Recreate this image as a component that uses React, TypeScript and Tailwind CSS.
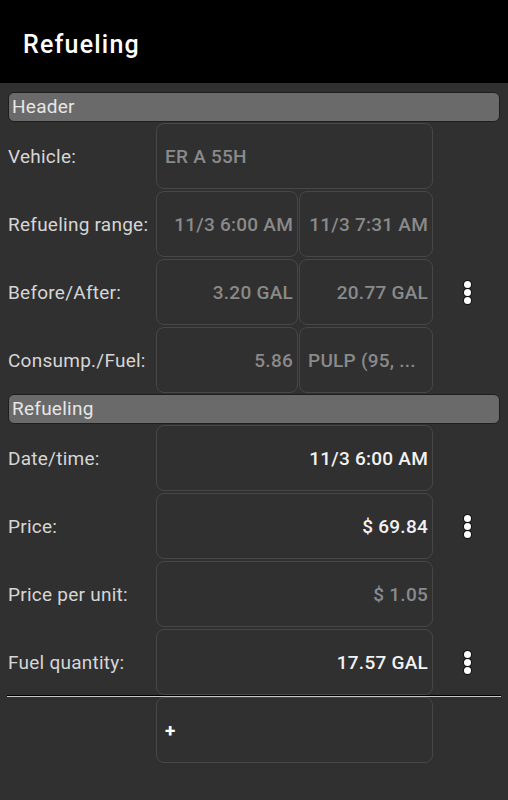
import React from "react";

const Kebab = () => (
  <div className="flex flex-col items-center gap-px">
    <div className="w-[7px] h-[7px] rounded-full bg-white ring-1 ring-[#111]" />
    <div className="w-[7px] h-[7px] rounded-full bg-white ring-1 ring-[#111]" />
    <div className="w-[7px] h-[7px] rounded-full bg-white ring-1 ring-[#111]" />
  </div>
);

type Cell = { text: string; align: "left" | "right"; color: string };

const Row = ({
  label,
  cells,
  kebab,
}: {
  label: string;
  cells: Cell[];
  kebab?: boolean;
}) => (
  <div className="flex h-[68px] items-stretch">
    <div className="w-[156px] pl-2 pt-[3px] flex items-center text-[19px] tracking-[0.25px] text-[#d6d6d6] whitespace-nowrap">
      {label}
    </div>
    <div className={cells.length === 2 ? "grid grid-cols-[142px_134px] gap-px w-[277px] py-px" : "flex w-[277px] py-px"}>
      {cells.map((c, i) => (
        <div
          key={i}
          className={
            "flex-1 flex items-center pt-[3px] border border-[#474747] rounded-[8px] font-medium text-[19px] tracking-[0.25px] whitespace-nowrap overflow-hidden " +
            (c.align === "right" ? "justify-end pr-1" : "justify-start pl-2") +
            " " +
            c.color
          }
        >
          {c.text}
        </div>
      ))}
    </div>
    <div className="flex-1 flex items-center justify-center pr-[8px] pl-[1px]">
      {kebab ? <Kebab /> : null}
    </div>
  </div>
);

const Section = ({ title }: { title: string }) => (
  <div className="mx-2 h-[30px] rounded-[6px] bg-[#6a6a6a] border border-[#1e1e1e] flex items-center pl-[3px] pt-[1px] text-[19px] tracking-[0.25px] text-[#e6e6e6]">
    {title}
  </div>
);

const G = "text-[#8a8a8a]";
const W = "text-[#f2f2f2]";

export default function App() {
  return (
    <div
      className="w-[508px] h-[800px] bg-[#303030] overflow-hidden"
      style={{ fontFamily: "Roboto, 'Noto Sans', sans-serif" }}
    >
      <div className="h-[83px] bg-black flex items-center pl-[23px] pt-[7px] text-white text-[25px] tracking-[1.2px] font-medium">
        Refueling
      </div>
      <div className="pt-[9px]">
        <Section title="Header" />
        <Row label="Vehicle:" cells={[{ text: "ER A 55H", align: "left", color: G }]} />
        <Row
          label="Refueling range:"
          cells={[
            { text: "11/3 6:00 AM", align: "right", color: G },
            { text: "11/3 7:31 AM", align: "right", color: G },
          ]}
        />
        <Row
          label="Before/After:"
          cells={[
            { text: "3.20 GAL", align: "right", color: G },
            { text: "20.77 GAL", align: "right", color: G },
          ]}
          kebab
        />
        <Row
          label="Consump./Fuel:"
          cells={[
            { text: "5.86", align: "right", color: G },
            { text: "PULP (95, ...", align: "left", color: G },
          ]}
        />
        <Section title="Refueling" />
        <Row label="Date/time:" cells={[{ text: "11/3 6:00 AM", align: "right", color: W }]} />
        <Row label="Price:" cells={[{ text: "$ 69.84", align: "right", color: W }]} kebab />
        <Row label="Price per unit:" cells={[{ text: "$ 1.05", align: "right", color: G }]} />
        <Row label="Fuel quantity:" cells={[{ text: "17.57 GAL", align: "right", color: W }]} kebab />
        <div className="mx-[7px] h-[2px] border-t border-black border-b border-b-[#c8c8c8] -mt-px" />
        <div className="flex h-[68px] -mt-px">
          <div className="w-[156px]" />
          <div className="w-[277px] py-px flex">
            <div className="flex-1 flex items-center pt-[3px] border border-[#474747] rounded-[8px] pl-2 text-[19px] font-bold text-white">
              +
            </div>
          </div>
        </div>
      </div>
    </div>
  );
}
